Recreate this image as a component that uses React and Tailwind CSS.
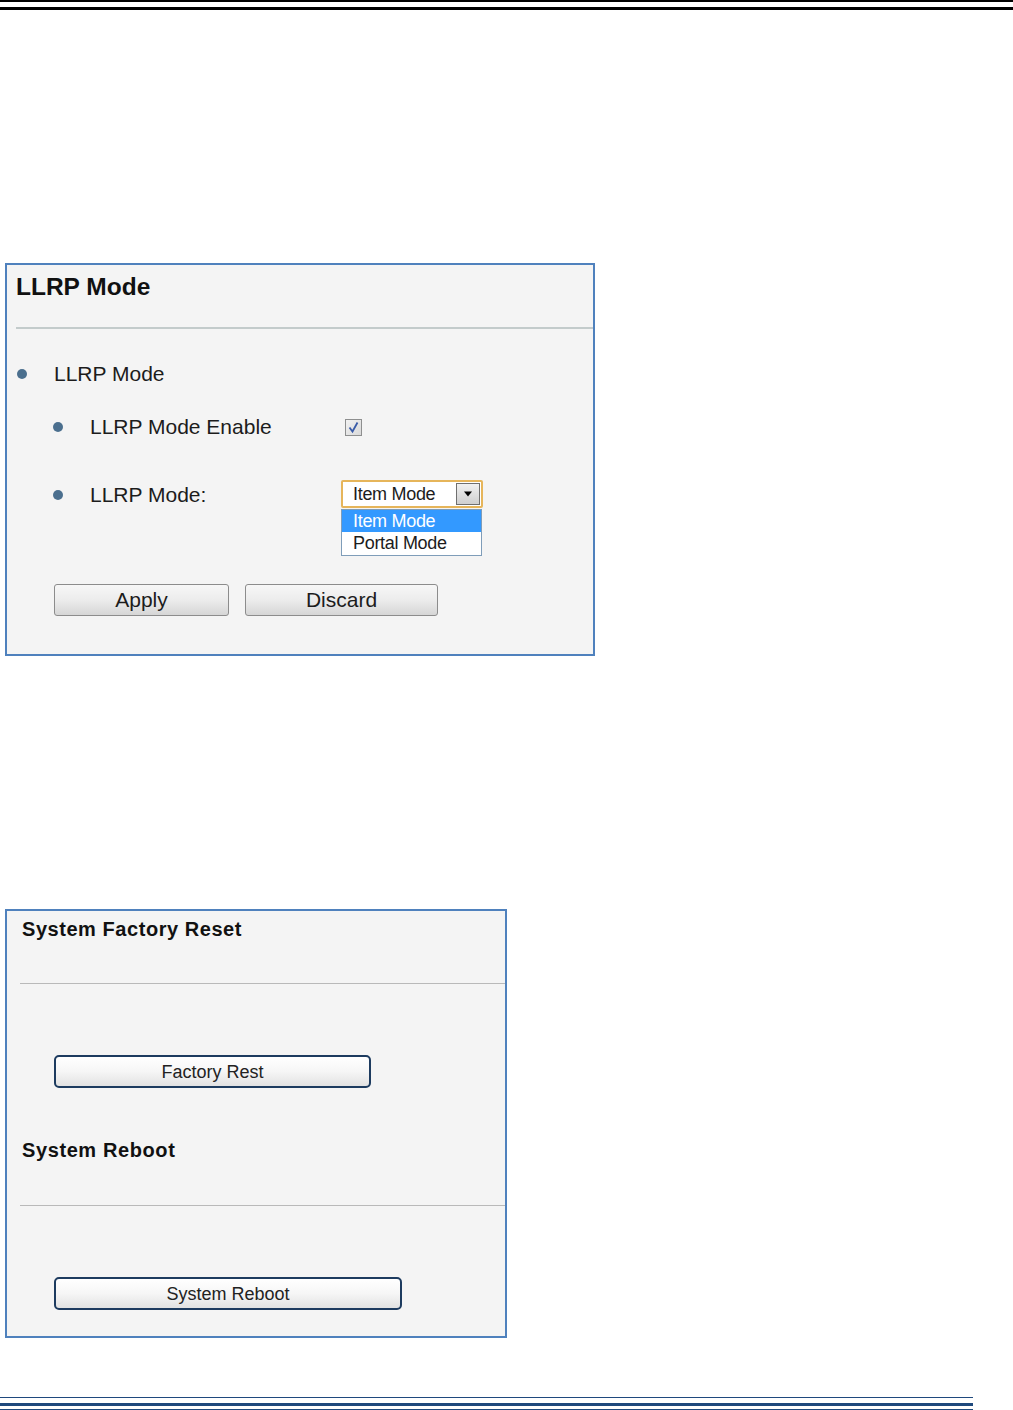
import React from 'react';

const font = { fontFamily: '"Liberation Sans", Arial, sans-serif' };

function Bullet({ label, indent }) {
  return (
    <div className={`flex items-center h-[24px] ${indent ? 'pl-[46px]' : 'pl-[10px]'}`}>
      <span className="w-[10px] h-[10px] rounded-full bg-[#4b6f8e]" />
      <span className="ml-[27px] text-[21px] leading-[24px] text-[#1c1c1c]">{label}</span>
    </div>
  );
}

function GrayButton({ children, width }) {
  return (
    <button
      className={`${width} h-[32px] rounded-[3px] border border-[#8c8c8c] bg-gradient-to-b from-[#f7f7f7] via-[#ececec] to-[#d6d6d6] text-[21px] leading-[24px] text-[#1c1c1c]`}
    >
      {children}
    </button>
  );
}

function BlueButton({ children, width }) {
  return (
    <button
      className={`${width} h-[33px] rounded-[5px] border-2 border-[#1d3b5f] bg-gradient-to-b from-[#ffffff] via-[#f6f6f6] to-[#e2e2e2] text-[18px] leading-[22px] text-[#222]`}
    >
      {children}
    </button>
  );
}

function LlrpPanel() {
  return (
    <div className="ml-[5px] w-[590px] h-[393px] border-2 border-[#4f81bd] bg-[#f4f4f4]">
      <div className="pt-[8px] pl-[9px] text-[24.5px] leading-[28px] font-bold text-[#111]">LLRP Mode</div>
      <div className="mt-[26px] ml-[9px] h-[2px] bg-[#c3cbcb]" />

      <div className="mt-[33px]">
        <Bullet label="LLRP Mode" />
      </div>

      <div className="mt-[29px] flex items-center">
        <div className="w-[338px]">
          <Bullet label="LLRP Mode Enable" indent />
        </div>
        <span className="w-[17px] h-[17px] border border-[#8e8f8f] bg-gradient-to-br from-[#f2f2f2] to-[#d9d9d9] flex items-center justify-center">
          <svg width="13" height="13" viewBox="0 0 13 13">
            <path d="M2.5 6.5 L5.5 10.5 L10.5 1.5" fill="none" stroke="#3a5ca8" strokeWidth="1.8" />
          </svg>
        </span>
      </div>

      <div className="mt-[43px] flex items-center">
        <div className="w-[334px]">
          <Bullet label="LLRP Mode:" indent />
        </div>
        <div className="relative -mt-[2px]">
          <div className="w-[142px] h-[28px] rounded-[2px] border-2 border-[#e6b55a] bg-white flex items-center">
            <span className="pl-[10px] flex-1 text-[18px] leading-[22px] tracking-[-0.3px] text-[#1c1c1c]">Item Mode</span>
            <span className="mr-[1px] w-[24px] h-[22px] border border-[#6f6f6f] bg-gradient-to-b from-[#f0f0f0] to-[#cfcfcf] flex items-center justify-center">
              <svg width="10" height="6" viewBox="0 0 10 6">
                <path d="M1 0.5 L9 0.5 L5 5.5 Z" fill="#000" />
              </svg>
            </span>
          </div>
          <div className="absolute left-0 top-[29px] w-[141px] border border-[#7f9db9] bg-white">
            <div className="h-[22px] bg-[#3399ff] pl-[11px] text-[18px] leading-[22px] tracking-[-0.3px] text-white">Item Mode</div>
            <div className="h-[23px] pl-[11px] text-[18px] leading-[23px] tracking-[-0.3px] text-[#1c1c1c]">Portal Mode</div>
          </div>
        </div>
      </div>

      <div className="mt-[76px] pl-[47px] flex gap-[16px]">
        <GrayButton width="w-[175px]">Apply</GrayButton>
        <GrayButton width="w-[193px]">Discard</GrayButton>
      </div>
    </div>
  );
}

function SystemPanel() {
  return (
    <div className="ml-[5px] w-[502px] h-[429px] border-2 border-[#4f81bd] bg-[#f4f4f4]">
      <div className="pt-[6px] pl-[15px] text-[20px] leading-[24px] font-bold tracking-[0.55px] text-[#111]">System Factory Reset</div>
      <div className="mt-[42px] ml-[13px] h-[1px] bg-[#b9b9b9]" />
      <div className="mt-[71px] pl-[47px]">
        <BlueButton width="w-[317px]">Factory Rest</BlueButton>
      </div>
      <div className="mt-[50px] pl-[15px] text-[20px] leading-[24px] font-bold tracking-[0.6px] text-[#111]">System Reboot</div>
      <div className="mt-[43px] ml-[13px] h-[1px] bg-[#b9b9b9]" />
      <div className="mt-[71px] pl-[47px]">
        <BlueButton width="w-[348px]">System Reboot</BlueButton>
      </div>
    </div>
  );
}

export default function App() {
  return (
    <div className="w-[1013px] h-[1410px] bg-white flex flex-col" style={font}>
      <div className="h-[2px] bg-black" />
      <div className="mt-[5px] h-[3px] bg-black" />

      <div className="mt-[253px]">
        <LlrpPanel />
      </div>

      <div className="mt-[253px]">
        <SystemPanel />
      </div>

      <div className="mt-auto w-[973px]">
        <div className="h-[1px] bg-[#1f497d]" />
        <div className="mt-[5px] h-[3px] bg-[#1f497d]" />
        <div className="mt-[3px] h-[1px] bg-[#1f497d]" />
      </div>
    </div>
  );
}
